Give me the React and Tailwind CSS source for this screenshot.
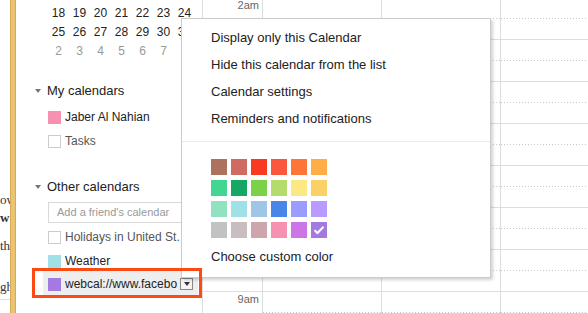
import React from 'react';

const palette = [
  ['#ac725e', '#d06b64', '#f83a22', '#fa573c', '#ff7537', '#ffad46'],
  ['#42d692', '#16a765', '#7bd148', '#b3dc6c', '#fbe983', '#fad165'],
  ['#92e1c0', '#9fe1e7', '#9fc6e7', '#4986e7', '#9a9cff', '#b99aff'],
  ['#c2c2c2', '#cabdbf', '#cca6ac', '#f691b2', '#cd74e6', '#a47ae2'],
];

const weeks = [
  { days: ['18', '19', '20', '21', '22', '23', '24'], muted: false },
  { days: ['25', '26', '27', '28', '29', '30', '31'], muted: false },
  { days: ['2', '3', '4', '5', '6', '7', '8'], muted: true },
];

const hours = ['2am', '3am', '4am', '5am', '6am', '7am', '8am', '9am'];

function Arrow() {
  return <div className="w-0 h-0 border-l-[3.5px] border-r-[3.5px] border-t-[4px] border-l-transparent border-r-transparent border-t-[#777]" />;
}

function CalendarRow({ color, label, muted }) {
  return (
    <div className="h-[24px] flex items-center pl-[32px] whitespace-nowrap overflow-hidden">
      {color ? (
        <div className="w-[13px] h-[13px] shrink-0" style={{ backgroundColor: color }} />
      ) : (
        <div className="w-[13px] h-[13px] shrink-0 border border-[#ccc] bg-white" />
      )}
      <span className={'ml-[4px] text-[12px] ' + (muted ? 'text-[#555]' : 'text-[#222]')}>{label}</span>
    </div>
  );
}

function SectionHeader({ title }) {
  return (
    <div className="h-[19px] flex items-center pl-[19px]">
      <Arrow />
      <span className="ml-[6px] text-[13px] text-[#222]">{title}</span>
    </div>
  );
}

function DayCell({ last }) {
  return (
    <div className={(last ? 'flex-1' : 'w-[119px]') + ' border-l border-t border-[#ddd] flex flex-col'}>
      <div className="h-[20px]" />
      <div className="h-px bg-[linear-gradient(to_right,#c8c8c8_1px,transparent_1px)] bg-[length:3px_1px]" />
    </div>
  );
}

export default function App() {
  return (
    <div className="w-[588px] h-[313px] relative overflow-hidden bg-white flex font-['Liberation_Sans',Arial,sans-serif]">
      {/* trozo de la pagina de atras */}
      <div className="w-[10px] shrink-0 overflow-hidden flex flex-col pt-[192px] text-[13px] leading-[15px] text-[#333] font-['Liberation_Serif',serif] whitespace-nowrap">
        <div>ow</div>
        <div className="mt-[3px] font-bold">w</div>
        <div className="mt-[13px]">th</div>
        <div className="mt-[26px]">gh</div>
        <div className="mt-[5px] h-px bg-[#ddd]" />
      </div>
      <div className="w-[6px] shrink-0 bg-[#ecc470] border-x border-[#d3aa58]" />

      {/* barra lateral */}
      <div className="w-[186px] shrink-0 flex flex-col">
        <div className="pt-[4px] pl-[32px]">
          {weeks.map((w, i) => (
            <div key={i} className="flex h-[19px] leading-[19px] text-[12px]">
              {w.days.map((d) => (
                <div key={d} className={'w-[21px] text-center ' + (w.muted ? 'text-[#999]' : 'text-[#222]')}>{d}</div>
              ))}
            </div>
          ))}
        </div>

        <div className="mt-[20px]">
          <SectionHeader title="My calendars" />
        </div>
        <div className="mt-[5px]">
          <CalendarRow color="#f691b2" label="Jaber Al Nahian" />
          <CalendarRow label="Tasks" muted />
        </div>

        <div className="mt-[24px]">
          <SectionHeader title="Other calendars" />
        </div>
        <div className="mt-[6px] ml-[32px] w-[150px] h-[21px] border border-[#d9d9d9] flex items-center pl-[8px] text-[11px] text-[#999] whitespace-nowrap overflow-hidden">
          Add a friend's calendar
        </div>
        <div className="mt-[2px]">
          <CalendarRow label="Holidays in United St." muted />
          <CalendarRow color="#9fe1e7" label="Weather" />
        </div>
        <div className="mt-[-2px] ml-[27px] w-[155px] h-[26px] bg-[#eee] flex items-center pl-[5px] pr-[5px]">
          <div className="w-[13px] h-[13px] shrink-0 bg-[#a47ae2]" />
          <div className="ml-[4px] flex-1 overflow-hidden whitespace-nowrap text-[12px] text-[#222]">webcal://www.facebook.com/ical/u.php</div>
          <div className="ml-[3px] w-[13px] h-[12px] shrink-0 border border-[#888] bg-[#f4f4f4] flex items-center justify-center">
            <div className="w-0 h-0 border-l-[3.5px] border-r-[3.5px] border-t-[4px] border-l-transparent border-r-transparent border-t-[#333]" />
          </div>
        </div>
      </div>

      {/* cuadricula del calendario */}
      <div className="flex-1 overflow-hidden">
        <div className="mt-[-3px] flex flex-col">
          {hours.map((h) => (
            <div key={h} className="h-[42px] flex">
              <div className="w-[60px] shrink-0 border-l border-t border-[#ddd] text-right pr-[3px] pt-[1px] text-[11px] leading-[13px] text-[#666]">{h}</div>
              <DayCell />
              <DayCell />
              <DayCell last />
            </div>
          ))}
        </div>
      </div>

      {/* menu del calendario */}
      <div className="absolute left-[181px] top-[18px] w-[310px] h-[260px] z-10 bg-white border border-[#ccc] shadow-[2px_2px_3px_rgba(0,0,0,0.18)] flex flex-col">
        <div className="pt-[5px] text-[13px] text-[#222]">
          <div className="h-[27px] leading-[27px] pl-[29px]">Display only this Calendar</div>
          <div className="h-[27px] leading-[27px] pl-[29px]">Hide this calendar from the list</div>
          <div className="h-[27px] leading-[27px] pl-[29px]">Calendar settings</div>
          <div className="h-[27px] leading-[27px] pl-[29px]">Reminders and notifications</div>
        </div>
        <div className="mt-[9px] h-px bg-[#ebebeb]" />
        <div className="mt-[17px] ml-[29px] flex flex-col gap-[5px]">
          {palette.map((row, i) => (
            <div key={i} className="flex gap-[4px]">
              {row.map((c, j) => (
                <div key={c} className="w-[16px] h-[16px] flex items-center justify-center" style={{ backgroundColor: c }}>
                  {i === 3 && j === 5 && (
                    <svg width="12" height="10" viewBox="0 0 12 10">
                      <path d="M1.5 5.2 L4.5 8 L10.5 1.8" fill="none" stroke="#fff" strokeWidth="2" />
                    </svg>
                  )}
                </div>
              ))}
            </div>
          ))}
        </div>
        <div className="mt-[9px] h-[19px] leading-[19px] pl-[29px] text-[13px] text-[#222]">Choose custom color</div>
      </div>

      {/* marca roja */}
      <div className="absolute left-[32px] top-[268px] w-[170px] h-[30px] border-[3px] border-[#fd4a14] z-20" />
    </div>
  );
}
